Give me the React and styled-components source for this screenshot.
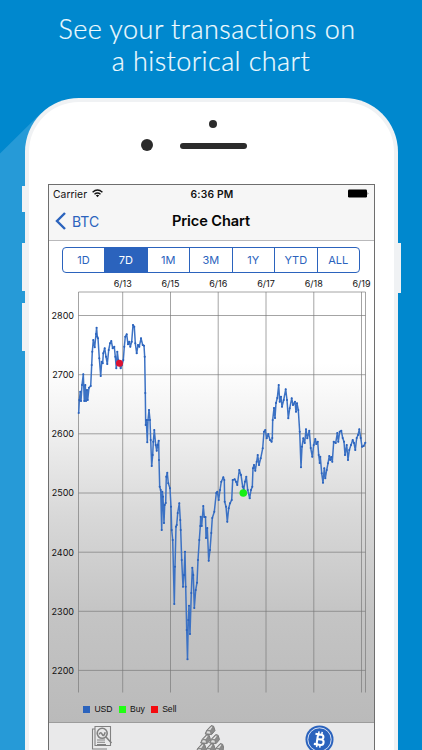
import React from "react";
import styled, { createGlobalStyle } from "styled-components";

const GlobalStyle = createGlobalStyle`
  *, *::before, *::after { box-sizing: border-box; }
  html, body { margin: 0; padding: 0; overflow: hidden; }
`;

const BLUE = "#2b63bd";

const Poster = styled.main`
  position: relative;
  width: 422px;
  height: 750px;
  overflow: hidden;
  background: #0088ce;
  font-family: Inter, "Liberation Sans", sans-serif;
  display: flex;
  flex-direction: column;
`;

const LongShadow = styled.svg`
  position: absolute;
  left: 0;
  top: 0;
`;

const Headline = styled.h1`
  position: relative;
  flex: none;
  margin: 0;
  height: 98px;
  padding-top: 13px;
  display: flex;
  flex-direction: column;
  align-items: center;
  font: 300 27px/32px Lato, sans-serif;
  -webkit-text-stroke: 0.2px #f0fbff;
  color: #f0fbff;
`;

const HeadlineLine = styled.span`
  white-space: nowrap;
  letter-spacing: ${(p) => p.$tracking}px;
  margin-right: ${(p) => p.$shift}px;
`;

const Phone = styled.section`
  position: relative;
  flex: none;
  width: 373px;
  height: 800px;
  margin-left: 25px;
  border: 4px solid #f0f2f4;
  border-bottom: 0;
  border-radius: 54px 54px 0 0;
  background: #fff;
  padding-left: 19px;
`;

const SideButton = styled.i`
  position: absolute;
  ${(p) => p.$side}: -7px;
  top: ${(p) => p.$top}px;
  width: 4px;
  height: ${(p) => p.$height}px;
  background: #f0f2f4;
`;

const Face = styled.div`
  position: relative;
  height: 82px;
`;

const Dot = styled.i`
  position: absolute;
  left: ${(p) => p.$x}px;
  top: ${(p) => p.$y}px;
  width: ${(p) => p.$w}px;
  height: ${(p) => p.$h}px;
  border-radius: 10px;
  background: #2b2b2b;
`;

const Screen = styled.div`
  width: 327px;
  height: 620px;
  border: 1px solid #6e6e6e;
  border-bottom: 0;
  background: #fff;
  display: flex;
  flex-direction: column;
`;

const StatusBar = styled.div`
  height: 17px;
  padding: 0 5px 0 4px;
  display: grid;
  grid-template-columns: 1fr auto 1fr;
  align-items: center;
  background: #f6f6f6;
  font-size: 10.3px;
  letter-spacing: 0.05px;
  color: #111;
`;

const Carrier = styled.span`
  display: flex;
  align-items: center;
  gap: 5px;
`;

const Clock = styled.span`
  font-weight: 600;
  letter-spacing: 0.2px;
  margin-left: 2px;
`;

const Battery = styled.svg`
  justify-self: end;
`;

const NavBar = styled.header`
  height: 39px;
  padding: 0 7px 0 6px;
  display: grid;
  grid-template-columns: 1fr auto 1fr;
  align-items: center;
  background: #f6f6f6;
  border-bottom: 1px solid #b9b9bb;
`;

const Back = styled.span`
  display: flex;
  align-items: center;
  gap: 6px;
  font-size: 14px;
  color: ${BLUE};
`;

const NavTitle = styled.h2`
  margin: 0;
  font-size: 14.6px;
  font-weight: 600;
  letter-spacing: -0.1px;
  color: #050505;
`;

const Segments = styled.div`
  flex: none;
  width: 298px;
  height: 26px;
  margin: 6px 0 0 13px;
  display: grid;
  grid-template-columns: 41px repeat(6, 1fr);
  border: 1px solid ${BLUE};
  border-radius: 4px;
  overflow: hidden;
`;

const Segment = styled.button`
  border: 0;
  border-left: ${(p) => (p.$first ? 0 : 1)}px solid ${BLUE};
  padding: 0;
  font: 400 11px/24px Inter, sans-serif;
  color: ${(p) => (p.$active ? "#fff" : BLUE)};
  background: ${(p) => (p.$active ? BLUE : "transparent")};
`;

const ChartPanel = styled.div`
  flex: none;
  height: 449px;
  background: linear-gradient(#fff 0, #fff 20%, #f0f0f0 35%, #d8d8d8 54%, #c4c4c4 76%, #bababa 100%);
  display: flex;
  flex-direction: column;
`;

const Plot = styled.svg`
  display: block;
  flex: none;
  font: 400 9px Inter, sans-serif;
`;

const Legend = styled.div`
  display: flex;
  gap: 6px;
  padding-left: 34px;
  height: 14px;
  align-items: center;
  margin-top: 1px;
`;

const LegendItem = styled.span`
  display: flex;
  align-items: center;
  gap: 4.4px;
  font: 8.6px "Liberation Sans", sans-serif;
  color: #111;
  &::before {
    content: "";
    width: 7px;
    height: 7px;
    background: ${(p) => p.$color};
  }
`;

const TabBar = styled.nav`
  height: 60px;
  flex: none;
  border-top: 1px solid #9c9c9c;
  background: #e9e9ea;
  display: grid;
  grid-template-columns: 105px 111px 108px;
  justify-items: center;
  padding-top: 2px;
`;

const ranges = ["1D", "7D", "1M", "3M", "1Y", "YTD", "ALL"];
const prices = [[2800, 315.5], [2700, 374.7], [2600, 433.8], [2500, 493], [2400, 552.2], [2300, 611.3], [2200, 670.4]];
const days = [["6/13", 122.7], ["6/15", 170.5], ["6/16", 218.2], ["6/17", 266], ["6/18", 313.8], ["6/19", 361.5]];

const series = `78.7,413 79.3,400 80.3,391.7 81,401 82,385 83.3,374.3 84.3,401 85.3,385 86,401 87,390 87.7,400 89,387.7 90.7,386
91.7,365 92.3,351.7 93.3,340 94.7,347.3 96,334 96.6,327.7 97.3,336.7 98,338.3 99.3,358.3 100.7,376 101.7,361.7 102.7,363.3 103.3,353.3
104.7,348.3 106,356.7 107.3,364 108.7,350 110,343.3 111.3,341 112.7,348.3 114.3,346.7 115.3,356.7 116.3,368.3 117.3,351.7
118.3,360 119.7,365 120.7,368.3 122,365 123.3,360 124.3,346.7 125.3,336.7 126.7,334.3 128,344.3 129.3,341.7 130.3,346.7
131.7,341.7 133,325 134.3,326.7 135.3,343.3 136.7,353.3 138,345 139.3,346.7 141,338.3 142.7,345 144,345.7 144.7,356.7
145.3,393 145.7,425 146.3,420 147.3,442.3 148,420 149,410 150,420 150.7,440 151.7,466 152.7,455 153.3,441.7 154.3,430
155.7,445 156.7,450.7 157.7,445 158.7,440.7 159,460 159.7,486.7 160.7,490 161.7,530 162.3,491.7 163,496.7 164,523
164.7,505 165.7,503 166.3,476.7 167.3,472.7 168.3,483.3 170,488.3 171,506.7 171.7,530 172.7,540 174.3,604 175,566.7
176,526.7 176.7,525 177.7,513 179.3,503.3 180.3,520 180.7,530 181.7,560 183,586.7 184,575 185,551.7 185.7,586.7 186.7,630
187.5,659.3 188.3,620 189,605.7 190,634 191.3,593 192.3,567.7 193.3,575 194.3,608 195.7,590 197,582.7 198,560 199.3,540
200.3,526 200.7,516.7 201.7,526 203.3,506 204.3,517 205.5,517 206,538 207.3,528 208.7,560.7 210,550 211.3,533 212.3,518
214.3,511.7 216.3,493 217.3,491.7 218.7,500 220,490 221.3,481.7 223.3,477.3 224.3,480 224.7,501.7 226,506.7 227.3,521.7
228.7,508.3 230,503.3 231.7,500 232.7,480 234.7,479.3 236,481.7 237.3,485 239.3,470 241,475 242.7,486.7 243.7,489.3
245,481.7 246.3,476.7 247.7,490 249.7,498.3 251,490 252.3,486.7 253,468.3 254,465 255.3,470.7 256.7,461.7 257.7,455
259,465 260.7,458.3 262.7,448.3 264,431.7 265.3,430 266.7,438.3 268.3,434 270,440 271.6,441.7 272.3,438 272.7,420
274,408 275,418 276,403 277.3,398 278.7,385 279.7,401.7 281,396.7 282,406.7 283.7,400 285.7,389.3 287,400 288.3,418.3
289.7,408.3 291.7,398.3 293,405 295,401.7 296,411.7 297,403.3 298.3,410 299.7,431.7 301,467.3 302,446.7 303.3,438.3
304.7,443 306,429.3 307.3,438.3 309.3,430.7 310.7,448 312.3,456.7 313.7,445 315.3,439 316.3,444 317.7,441.7 318.7,455
319.7,463 320.3,456.7 321.7,473.3 323,482.7 324.3,468.3 325.3,478.3 326.7,470 328,463.3 329.3,456 330.3,460 331.3,457
332.3,461.7 333.7,441.7 335.7,443 337.3,433 338.3,441.7 339.7,431.7 341.3,430.7 342.7,438 344,441.7 345,455 346.7,445
348,460 349.3,450 351,445 352.7,440 354,443 355.3,450 356.7,438 358,435 359.3,429.3 360.7,438 362,446.7 363.7,446 365.3,442.7`;
const points = series.split(/\s+/).map((p) => p.split(",").map(Number));

function PriceChart() {
  return (
    <Plot width="325" height="428" viewBox="49 273 325 428">
      <g stroke="#777" strokeOpacity=".75" strokeWidth=".9" fill="none">
        <path d="M78.5 692.5V292H365.5V692.5" />
        {prices.map(([p, y]) => <path key={p} d={`M78.5 ${y}H365.5`} />)}
        {days.map(([d, x]) => <path key={d} d={`M${x} 292V692.5`} />)}
      </g>
      <g fill="#111">
        {prices.map(([p, y]) => <text key={p} x="74" y={y + 3.4} textAnchor="end">{p}</text>)}
        {days.map(([d, x]) => <text key={d} x={x} y="287" textAnchor="middle">{d}</text>)}
      </g>
      <polyline points={series} fill="none" stroke="#3c72c4" strokeWidth="1.5" strokeLinejoin="round" />
      <g fill={BLUE}>
        {points.map(([x, y], i) => <circle key={i} cx={x} cy={y} r="1.05" />)}
      </g>
      <circle cx="119.5" cy="363.3" r="3.5" fill="#dc1230" />
      <circle cx="243.3" cy="493" r="3.8" fill="#16ef16" />
    </Plot>
  );
}

function ReportIcon() {
  return (
    <svg width="22" height="25" viewBox="0 0 22 25" fill="none" stroke="#818181" strokeWidth="1.1">
      <path d="M4 4H1.5v20H16M4 1.5h15.5v19H4z" />
      <path d="M6 15h8M6 17.3h8M6 19.5h9" />
      <circle cx="11.2" cy="8.3" r="5" strokeWidth="1.6" />
      <path d="M8.2 9.3q1.5-3 3 0t3-2M15 12l5.5 6" strokeWidth="1.6" />
    </svg>
  );
}

function GoldIcon() {
  const bars = [[10, 0], [5.5, 9], [14.5, 9], [1, 18], [10, 18], [19, 18]];
  return (
    <svg width="28" height="27" viewBox="0 0 28 27">
      {bars.map(([x, y]) => (
        <g key={`${x}-${y}`} transform={`translate(${x} ${y})`} stroke="#7a7a7a" strokeWidth="1" strokeLinejoin="round">
          <path d="M-.8 9L.8 5.2 5.2.6 7.6 1.2 9 5.6 5.6 9.6z" fill="#8b8b8b" />
          <path d="M1.4 5L5.4 1.2 7 1.6 4.4 5.6z" fill="#e2e2e2" strokeWidth=".6" />
          <path d="M-.4 8.8L1.1 5.6 4.3 6 5.1 9.2z" fill="#dcdcdc" strokeWidth=".8" />
        </g>
      ))}
    </svg>
  );
}

function BitcoinIcon() {
  return (
    <svg width="29" height="29" viewBox="0 0 29 29" fill="none">
      <circle cx="14.5" cy="14.5" r="14" fill={BLUE} />
      <circle cx="14.5" cy="14.5" r="11.7" stroke="#e9eefa" strokeWidth=".9" />
      <g transform="rotate(9 14.5 14.5)" stroke="#fff" strokeWidth="2.1">
        <path d="M9.6 9.5h6a2.4 2.4 0 0 1 0 4.8H12.3h4a2.7 2.7 0 0 1 0 5.4H9.6M12.3 9.5v10.2" />
        <path d="M12.8 6.6v3M16 6.6v3M12.8 19.6v3M16 19.6v3" strokeWidth="1.5" />
      </g>
    </svg>
  );
}

export default function App() {
  return (
    <>
      <GlobalStyle />
      <Poster>
        <LongShadow width="422" height="750">
          <path d="M0 153.5L40 114V750H0z" fill="#269ad7" />
        </LongShadow>
        <Headline>
          <HeadlineLine $tracking={0.46} $shift={8}>See your transactions on</HeadlineLine>
          <HeadlineLine $tracking={0.4} $shift={0}>a historical chart</HeadlineLine>
        </Headline>
        <Phone>
          <SideButton $side="left" $top={84} $height={26} />
          <SideButton $side="left" $top={141} $height={48} />
          <SideButton $side="left" $top={201} $height={48} />
          <SideButton $side="right" $top={141} $height={50} />
          <Face>
            <Dot $x={161} $y={17.5} $w={8} $h={8} />
            <Dot $x={92.5} $y={37} $w={12} $h={12} />
            <Dot $x={132} $y={41} $w={67} $h={5.5} />
          </Face>
          <Screen>
            <StatusBar>
              <Carrier>
                Carrier
                <svg width="11" height="9" viewBox="0 0 11 9" fill="none" stroke="#111" strokeWidth="1.4">
                  <path d="M.6 3.2Q5.5-1.2 10.4 3.2M2.5 5.2Q5.5 2.6 8.5 5.2" />
                  <path d="M3.8 6.3Q5.5 5 7.2 6.3L5.5 8.2z" fill="#111" stroke="none" />
                </svg>
              </Carrier>
              <Clock>6:36 PM</Clock>
              <Battery width="22" height="9" viewBox="0 0 22 9">
                <rect x="1" y=".5" width="19" height="8" rx="1.2" fill="#000" />
                <path d="M20.7 3q1.3 1.5 0 3z" fill="#000" />
              </Battery>
            </StatusBar>
            <NavBar>
              <Back>
                <svg width="11" height="18" viewBox="0 0 11 18" fill="none" stroke={BLUE} strokeWidth="2.4">
                  <path d="M10 1L2 9l8 8" />
                </svg>
                BTC
              </Back>
              <NavTitle>Price Chart</NavTitle>
            </NavBar>
            <Segments>
              {ranges.map((r, i) => (
                <Segment key={r} $first={i === 0} $active={r === "7D"}>{r}</Segment>
              ))}
            </Segments>
            <ChartPanel>
              <PriceChart />
              <Legend>
                <LegendItem $color={BLUE}>USD</LegendItem>
                <LegendItem $color="#20ff14">Buy</LegendItem>
                <LegendItem $color="#f40b0f">Sell</LegendItem>
              </Legend>
            </ChartPanel>
            <TabBar>
              <ReportIcon />
              <GoldIcon />
              <BitcoinIcon />
            </TabBar>
          </Screen>
        </Phone>
      </Poster>
    </>
  );
}
